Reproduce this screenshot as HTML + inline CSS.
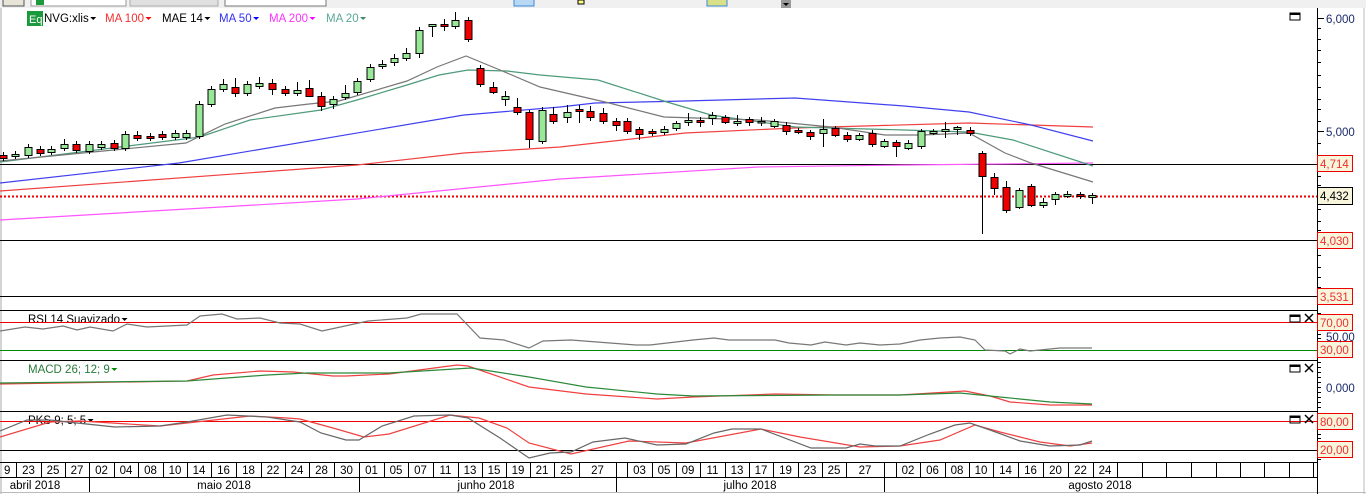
<!DOCTYPE html>
<html><head><meta charset="utf-8">
<style>
html,body{margin:0;padding:0;background:#fff;width:1366px;height:494px;overflow:hidden;font-family:"Liberation Sans",Arial,sans-serif;}
svg{display:block}
text{font-family:"Liberation Sans",Arial,sans-serif;font-size:11px}
.lg{font-size:11.5px}
</style></head><body>
<svg id="s" width="1366" height="494" viewBox="0 0 1366 494" xmlns="http://www.w3.org/2000/svg">
<rect x="0" y="0" width="1366" height="494" fill="#fff"/>
<rect x="0" y="0" width="1366" height="8" fill="#f0f0f0"/>
<rect x="3" y="-2" width="21" height="8" fill="#e8e4d8" stroke="#555"/>
<rect x="31" y="-2" width="95" height="8" fill="#fff" stroke="#999"/>
<rect x="36" y="-2" width="8" height="7" fill="#1a9a3a"/>
<rect x="130" y="-2" width="88" height="8" fill="#e0e0e0" stroke="#aaa"/>
<rect x="225" y="-2" width="101" height="8" fill="#fff" stroke="#777"/>
<rect x="514" y="-2" width="20" height="8" fill="#b8d8f4" stroke="#3a8ad8"/>
<rect x="578" y="0" width="6" height="4" fill="#ff8" stroke="#000"/>
<rect x="707" y="-2" width="20" height="8" fill="#d8e08a" stroke="#3a8ad8"/>
<rect x="781" y="0" width="10" height="8" fill="#999"/>
<path d="M783 3 h6 l-3 3z" fill="#000"/>
<line x1="1" y1="8" x2="1" y2="494" stroke="#aaa"/>
<line x1="1364" y1="8" x2="1364" y2="494" stroke="#bbb"/>
<line x1="0" y1="492.5" x2="1366" y2="492.5" stroke="#bbb"/>

<line x1="0" y1="164.5" x2="1317" y2="164.5" stroke="#000"/>
<line x1="0" y1="240.5" x2="1317" y2="240.5" stroke="#000"/>
<line x1="0" y1="296.5" x2="1317" y2="296.5" stroke="#000"/>
<line x1="0" y1="196.5" x2="1317" y2="196.5" stroke="#e00" stroke-width="2" stroke-dasharray="2,2"/>
<g fill="none" stroke-width="1.2">
<polyline stroke="#ff55ff" points="0,220 357,199 560,179 758,167 904,165 1093,163"/>
<polyline stroke="#f04040" points="0,191 357,165 464,153 560,147 685,133 795,128 969,123 1093,127"/>
<polyline stroke="#4040f0" points="0,183 179,163 464,115 560,107 595,103 685,101 795,98 904,106 969,112 1031,125 1093,141"/>
<polyline stroke="#4d9a7a" points="0,162 200,137 250,120 321,110 357,100 407,85 439,75 468,70 507,71 540,75 598,80 667,102 711,115 795,127 904,130 969,132 1013,140 1093,166"/>
<polyline stroke="#777" points="0,161 186,143 225,124 275,108 309,104 339,101 407,81 437,67 466,56 500,70 540,87 605,102 664,117 758,120 831,127 885,135 922,135 969,133 1005,153 1031,163 1093,182"/>
</g>
<g id="candles"></g>

<rect x="27" y="11" width="16" height="15" fill="#1a9a3a"/>
<text x="29" y="23" fill="#fff" font-size="10">Eq</text>
<g id="leg">
<text class="lg ar" data-c="#000" x="44" y="22" fill="#000">NVG:xlis</text>
<text class="lg ar" data-c="#f00" x="105" y="22" fill="#f03030">MA 100</text>
<text class="lg ar" data-c="#000" x="162" y="22" fill="#000">MAE 14</text>
<text class="lg ar" data-c="#00f" x="219" y="22" fill="#3030f0">MA 50</text>
<text class="lg ar" data-c="#f0f" x="269" y="22" fill="#ff30ff">MA 200</text>
<text class="lg ar" data-c="#3a8a6a" x="326" y="22" fill="#5aa898">MA 20</text>
<text class="lg ar" data-c="#000" x="28" y="323" fill="#000">RSI 14 Suavizado</text>
<text class="lg ar" data-c="#080" x="28" y="373" fill="#2a7a3a">MACD 26; 12; 9</text>
<text class="lg ar" data-c="#000" x="28" y="424" fill="#000">PKS 9; 5; 5</text>
</g>
<rect x="1290" y="13" width="10" height="7" fill="none" stroke="#000"/><line x1="1290" y1="14" x2="1300" y2="14" stroke="#000" stroke-width="2"/>

<line x1="0" y1="310.5" x2="1317" y2="310.5" stroke="#000"/>
<line x1="0" y1="360.5" x2="1317" y2="360.5" stroke="#000"/>
<line x1="0" y1="411.5" x2="1317" y2="411.5" stroke="#000"/>
<line x1="0" y1="462.5" x2="1317" y2="462.5" stroke="#000"/>
<line x1="0" y1="477.5" x2="1317" y2="477.5" stroke="#000"/>

<line x1="0" y1="322.5" x2="1317" y2="322.5" stroke="#e00"/>
<line x1="0" y1="350.5" x2="1317" y2="350.5" stroke="#080"/>
<polyline fill="none" stroke="#777" stroke-width="1.2" points="0,331 25,327 43,329 63,326 77,330 90,327 113,331 127,324 147,327 187,325 200,316 222,314 237,319 260,318 280,323 300,324 322,331 368,321 407,318 421,314 457,314 480,338 504,340 529,348 543,341 571,340 636,345 650,345 693,340 714,338 729,340 775,340 789,343 811,345 825,342 846,345 860,343 880,345 900,344 920,340 940,338 960,337 975,340 985,350 1005,351 1010,354 1020,349 1030,351 1050,349 1060,348 1092,348"/>

<polyline fill="none" stroke="#f04040" stroke-width="1.2" points="0,384 187,381 213,375 260,371 293,372 333,376 346,376 389,374 457,365 468,366 529,387 586,394 657,399 693,397 775,394 836,395 900,395 965,391 990,396 1010,402 1050,405 1092,405"/>
<polyline fill="none" stroke="#2a8a3a" stroke-width="1.2" points="0,383 187,381 267,375 307,373 389,373 471,368 529,377 586,387 657,394 693,396 836,395 900,395 960,393 1000,397 1050,402 1092,404"/>

<line x1="0" y1="421.5" x2="1317" y2="421.5" stroke="#e00"/>
<line x1="0" y1="450.5" x2="1317" y2="450.5" stroke="#000"/>
<polyline fill="none" stroke="#f04040" stroke-width="1.2" points="0,437 50,422 80,421 160,426 250,416 287,418 300,419 333,428 364,437 389,434 450,415 479,418 507,428 529,443 571,454 629,441 686,443 761,429 800,437 860,447 900,446 940,440 975,425 1000,432 1040,442 1070,446 1092,443"/>
<polyline fill="none" stroke="#666" stroke-width="1.2" points="0,431 27,420 50,420 77,423 115,427 160,426 187,422 227,415 267,417 300,422 321,433 346,440 359,440 382,426 414,416 450,415 468,418 500,438 529,458 550,453 571,452 593,442 625,438 657,445 686,444 714,433 732,429 761,429 811,448 846,448 860,444 875,446 900,446 930,434 955,425 970,423 990,430 1020,441 1050,446 1080,445 1092,441"/>

<g stroke="#000" fill="none">
<rect x="1290" y="315" width="10" height="7"/><line x1="1290" y1="316" x2="1300" y2="316" stroke-width="2"/>
<path d="M1305 314l8 8M1313 314l-8 8" stroke-width="1.5"/>
<rect x="1290" y="365" width="10" height="7"/><line x1="1290" y1="366" x2="1300" y2="366" stroke-width="2"/>
<path d="M1305 364l8 8M1313 364l-8 8" stroke-width="1.5"/>
<rect x="1290" y="416" width="10" height="7"/><line x1="1290" y1="417" x2="1300" y2="417" stroke-width="2"/>
<path d="M1305 415l8 8M1313 415l-8 8" stroke-width="1.5"/>
</g>

<line x1="1317.5" y1="8" x2="1317.5" y2="494" stroke="#000"/>
<g id="ticks" stroke="#000"></g>
<text class="lg" x="1326" y="23" fill="#1a2a6a">6,000</text>
<text class="lg" x="1326" y="136" fill="#1a2a6a">5,000</text>
<g stroke="#e00" fill="#f7f5dc">
<rect x="1317.5" y="155.5" width="35" height="16"/>
<rect x="1317.5" y="232.5" width="35" height="16"/>
<rect x="1317.5" y="288.5" width="35" height="16"/>
<rect x="1317.5" y="314.5" width="35" height="16"/>
<rect x="1317.5" y="341.5" width="35" height="16"/>
<rect x="1317.5" y="413.5" width="35" height="16"/>
<rect x="1317.5" y="441.5" width="35" height="16"/>
</g>
<rect x="1317.5" y="187.5" width="35" height="17" fill="#f7f5dc" stroke="#000"/>
<g fill="#f03030">
<text class="lg" x="1320" y="168">4,714</text>
<text class="lg" x="1320" y="245">4,030</text>
<text class="lg" x="1320" y="301">3,531</text>
<text class="lg" x="1320" y="327">70,00</text>
<text class="lg" x="1320" y="354">30,00</text>
<text class="lg" x="1320" y="426">80,00</text>
<text class="lg" x="1320" y="454">20,00</text>
</g>
<text class="lg" x="1320" y="200" fill="#000">4,432</text>
<text class="lg" x="1326" y="341" fill="#1a2a6a">50,00</text>
<text class="lg" x="1326" y="392" fill="#1a2a6a">0,000</text>

<g id="dates"></g>
<g fill="#000" text-anchor="middle">
<text class="lg" x="35" y="489">abril 2018</text>
<text class="lg" x="224" y="489">maio 2018</text>
<text class="lg" x="486" y="489">junho 2018</text>
<text class="lg" x="750" y="489">julho 2018</text>
<text class="lg" x="1100" y="489">agosto 2018</text>
</g>
<g stroke="#000">
<line x1="89.5" y1="477" x2="89.5" y2="492"/>
<line x1="359.5" y1="477" x2="359.5" y2="492"/>
<line x1="616.5" y1="477" x2="616.5" y2="492"/>
<line x1="884.5" y1="477" x2="884.5" y2="492"/>
</g>
</svg>
<script>
var NS="http://www.w3.org/2000/svg";
function el(p,t,a){var e=document.createElementNS(NS,t);for(var k in a)e.setAttribute(k,a[k]);p.appendChild(e);return e;}
var C=[
[3,155,158,'r'],[15,154,156,'g'],[28,147,155,'g',0,158],[40,149,153,'r'],[51,149,152,'g'],[64,144,148,'g',139],[76,144,150,'r'],[89,144,151,'g'],[101,144,147,'g'],[114,143,148,'r',140,151],[125,134,148,'g'],[137,135,138,'r',131],[150,136,138,'r'],[162,134,137,'r',131],[175,133,137,'g',130],[186,133,137,'g'],[199,104,136,'g'],[211,89,104,'g',86],[223,84,89,'g',79],[235,87,93,'r',78,97],[247,84,93,'g'],[259,83,86,'g',77],[272,83,89,'r',79,95],[285,89,93,'r'],[297,90,93,'g',82],[309,88,96,'r',80,97],[321,96,106,'r',92,111],[333,99,104,'g',96,109],[345,93,97,'g',85],[357,81,92,'g'],[370,67,79,'g'],[382,64,66,'g',60,69],[394,58,62,'g',54,66],[406,53,58,'g',48],[419,30,53,'g',27,58],[432,24,26,'g',24,37],[444,24,26,'r',19,31],[455,20,26,'g',12],[468,20,39,'r'],
[480,68,84,'r'],[493,87,92,'r',82,94],[505,96,99,'g',91,106],[517,107,112,'r',98],[529,112,139,'r',110,148],[542,110,141,'g'],
[553,114,121,'r',107],[567,112,117,'g',105,123],[579,109,111,'r',105,123],[590,111,117,'r',106,121],[603,113,121,'r',108],[616,121,125,'r',118,131],[627,121,131,'r'],[639,129,134,'r',127,140],[652,131,133,'r',129,136],[664,129,132,'g'],[676,123,128,'g',121],[688,120,122,'g',113,126],[700,120,122,'r',117,127],[712,115,118,'g',112,125],[725,117,122,'r',115,124],[737,121,123,'g',115,126],[749,119,122,'r',117,126],[761,121,122,'g',117,126],[774,121,126,'g',119,128],[786,125,131,'r',122,135],[798,130,132,'r',128,134],[810,132,136,'r',130,140],[823,129,133,'g',119,147],[835,128,135,'r',126,137],[847,135,139,'r',132,142],[859,135,139,'g',133,141],[872,133,144,'r'],[884,141,146,'g',139,148],[896,142,146,'r',140,157],[908,143,148,'g',140,150],[921,131,146,'g',129],[933,131,133,'g',129,135],[945,129,131,'g',122,138],[957,127,129,'g',126,135],[970,130,133,'r',127,136],
[982,153,176,'r',151,234],[994,177,188,'r',173,195],[1006,187,210,'r',181,213],[1019,190,207,'g',188,209],[1031,186,205,'r',184,207],[1043,202,205,'g',198,208],[1055,194,199,'g',192,205],[1067,194,196,'g',191,198],[1080,194,196,'r',192,199],[1092,195,197,'g',193,204]];
var g=document.getElementById('candles');
C.forEach(function(c){var x=c[0],t=c[1],b=c[2];var wt=c[4]||t-3,wb=c[5]||b+3;
el(g,'line',{x1:x+0.5,x2:x+0.5,y1:wt,y2:wb,stroke:'#000'});
el(g,'rect',{x:x-3,y:t+0.5,width:7,height:Math.max(b-t,1.5),fill:c[3]=='r'?'#ee0000':'#98e898',stroke:'#000'});});
var leg=document.getElementById('leg');
Array.prototype.slice.call(document.querySelectorAll('.ar')).forEach(function(t){
var x=parseFloat(t.getAttribute('x'))+t.getComputedTextLength()+1.5,y=parseFloat(t.getAttribute('y'))-5;
el(leg,'path',{d:'M'+x+' '+y+'h6l-3 3z',fill:t.getAttribute('data-c')});});
var tk=document.getElementById('ticks');
[18,28,39,50,62,75,87,99,109,121,131,143,156,176,185,209,221,230,246,255,267,277,287,297].forEach(function(y){el(tk,'line',{x1:1317,x2:1321,y1:y+0.5,y2:y+0.5});});
[18,131].forEach(function(y){el(tk,'line',{x1:1317,x2:1324,y1:y+0.5,y2:y+0.5});});
[313,318,326,334,338,342,346,355,362,367,372,377,382,387,392,397,402,407,414,418,426,434,438,446,454,459].forEach(function(y){el(tk,'line',{x1:1317,x2:1321,y1:y+0.5,y2:y+0.5});});
var dv=[16,41,65,89,114,138,163,187,211,236,261,285,309,334,359,384,408,433,458,482,506,530,554,579,616,627,652,676,700,725,749,773,798,822,846,884,896,920,945,969,993,1018,1043,1068,1093,1117,1142,1166,1191,1216,1240,1264,1289,1313];
var L=['23','25','27','02','04','08','10','14','16','18','22','24','28','30','01','05','07','11','13','15','19','21','25','27','','03','05','09','11','13','17','19','23','25','27','','02','06','08','10','14','16','20','22','24'];
var dg=document.getElementById('dates');
dv.forEach(function(x){el(dg,'line',{x1:x+0.5,x2:x+0.5,y1:462,y2:477,stroke:'#000'});});
var t0=el(dg,'text',{x:4,y:474,'class':'lg'});t0.textContent='9';
for(var i=0;i<L.length;i++){if(!L[i])continue;var a=dv[i],b=dv[i+1];var t=el(dg,'text',{x:(a+b)/2,y:474,'text-anchor':'middle','class':'lg'});t.textContent=L[i];}
</script>
</body></html>
